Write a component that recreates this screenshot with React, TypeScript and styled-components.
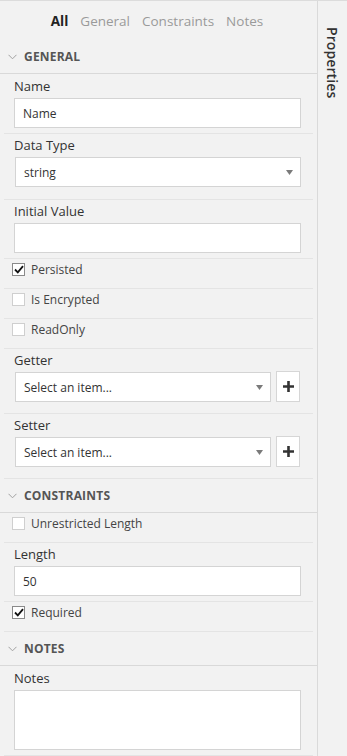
import React from "react";
import styled, { createGlobalStyle } from "styled-components";

const GlobalStyle = createGlobalStyle`
  html, body {
    margin: 0;
    padding: 0;
    background-color: #f2f2f2;
  }
  body {
    font-family: "Open Sans", "Noto Sans", Arial, sans-serif;
    color: #333;
  }
  * {
    box-sizing: border-box;
  }
`;

const Frame = styled.div`
  display: flex;
  width: 347px;
  height: 756px;
  border-top: 1px solid #dcdcdc;
  background-color: #f2f2f2;
  overflow: hidden;
`;

const Main = styled.div`
  width: 318px;
  flex-shrink: 0;
  border-right: 1px solid #dadada;
`;

const Side = styled.div`
  flex: 1;
  display: flex;
  justify-content: center;
  padding-top: 26px;
`;

const SideTitle = styled.div`
  writing-mode: vertical-rl;
  font-size: 14px;
  font-weight: 600;
  color: #333;
  letter-spacing: 0.1px;
`;

const Tabs = styled.div`
  height: 39px;
  display: flex;
  align-items: center;
  justify-content: center;
  gap: 12px;
  padding-right: 3px;
  font-size: 13.5px;
`;

const Tab = styled.span<{ $active?: boolean }>`
  color: ${(p) => (p.$active ? "#222" : "#9a9a9a")};
  font-weight: ${(p) => (p.$active ? 700 : 400)};
`;

const SectionHeader = styled.div`
  height: 34px;
  display: flex;
  align-items: center;
  gap: 7px;
  padding-left: 8px;
  border-bottom: 1px solid #d9d9d9;
  font-size: 12px;
  font-weight: 700;
  color: #555;
  letter-spacing: 0.2px;
`;

const Group = styled.div<{ $pt?: number; $pb?: number }>`
  margin: 0 4px;
  padding: ${(p) => p.$pt ?? 1}px 12px ${(p) => p.$pb ?? 5}px 10px;
  border-bottom: 1px solid #e4e4e4;
`;

const Label = styled.div`
  font-size: 13px;
  line-height: 20px;
  color: #333;
`;

const TextInput = styled.div`
  margin-top: 2px;
  height: 30px;
  background-color: #fff;
  border: 1px solid #d4d4d4;
  padding: 0 8px;
  display: flex;
  align-items: center;
  font-size: 12px;
  color: #333;
`;

const TextArea = styled(TextInput)`
  height: 60px;
`;

const SelectRow = styled.div<{ $inset?: boolean }>`
  display: flex;
  gap: 5px;
  margin-top: 2px;
  padding: 0 ${(p) => (p.$inset ? 1 : 0)}px 0 1px;
`;

const Select = styled.div`
  flex: 1;
  height: 30px;
  background-color: #fff;
  border: 1px solid #d4d4d4;
  padding: 0 7px 0 8px;
  display: flex;
  align-items: center;
  justify-content: space-between;
  font-size: 12px;
  color: #333;
`;

const PlusButton = styled.div`
  width: 24px;
  height: 31px;
  margin-top: -1px;
  background-color: #fff;
  border: 1px solid #d6d6d6;
  display: flex;
  align-items: center;
  justify-content: center;
`;

const CheckRow = styled.div`
  margin: 0 4px;
  height: 30px;
  padding: 0 0 8px 8px;
  display: flex;
  align-items: center;
  gap: 6px;
  border-bottom: 1px solid #e4e4e4;
  font-size: 12px;
  color: #444;
`;

const Box = styled.div<{ $checked?: boolean }>`
  width: 13px;
  height: 13px;
  background-color: #fff;
  border: 1px solid ${(p) => (p.$checked ? "#8a8a8a" : "#cfcfcf")};
  display: flex;
  align-items: center;
  justify-content: center;
`;

function Chevron() {
  return (
    <svg width="9" height="6" viewBox="0 0 9 6">
      <path d="M0.5 0.8 L4.5 4.8 L8.5 0.8" fill="none" stroke="#a0a0a0" strokeWidth="1" />
    </svg>
  );
}

function Arrow() {
  return (
    <svg width="7" height="5" viewBox="0 0 7 5">
      <path d="M0 0 H7 L3.5 5 Z" fill="#7a7a7a" />
    </svg>
  );
}

function Plus() {
  return (
    <svg width="11" height="11" viewBox="0 0 11 11">
      <path d="M5.5 0 V11 M0 5.5 H11" stroke="#333" strokeWidth="2.6" />
    </svg>
  );
}

function Checkbox({ checked, label }: { checked?: boolean; label: string }) {
  return (
    <CheckRow>
      <Box $checked={checked}>
        {checked && (
          <svg width="10" height="9" viewBox="0 0 10 9">
            <path d="M1 4.5 L3.8 7.3 L9 1.2" fill="none" stroke="#111" strokeWidth="1.8" />
          </svg>
        )}
      </Box>
      {label}
    </CheckRow>
  );
}

function Section({ title }: { title: string }) {
  return (
    <SectionHeader>
      <Chevron />
      {title}
    </SectionHeader>
  );
}

function PickField({ label }: { label: string }) {
  return (
    <Group $pb={11}>
      <Label>{label}</Label>
      <SelectRow $inset>
        <Select>
          Select an item...
          <Arrow />
        </Select>
        <PlusButton>
          <Plus />
        </PlusButton>
      </SelectRow>
    </Group>
  );
}

export default function App() {
  return (
    <>
      <GlobalStyle />
      <Frame>
        <Main>
          <Tabs>
            <Tab $active>All</Tab>
            <Tab>General</Tab>
            <Tab>Constraints</Tab>
            <Tab>Notes</Tab>
          </Tabs>

          <Section title="GENERAL" />
          <Group $pt={2}>
            <Label>Name</Label>
            <TextInput>Name</TextInput>
          </Group>
          <Group $pb={12}>
            <Label>Data Type</Label>
            <SelectRow>
              <Select>
                string
                <Arrow />
              </Select>
            </SelectRow>
          </Group>
          <Group>
            <Label>Initial Value</Label>
            <TextInput />
          </Group>
          <Checkbox checked label="Persisted" />
          <Checkbox label="Is Encrypted" />
          <Checkbox label="ReadOnly" />
          <PickField label="Getter" />
          <PickField label="Setter" />

          <Section title="CONSTRAINTS" />
          <Checkbox label="Unrestricted Length" />
          <Group>
            <Label>Length</Label>
            <TextInput>50</TextInput>
          </Group>
          <Checkbox checked label="Required" />

          <Section title="NOTES" />
          <Group $pt={2}>
            <Label>Notes</Label>
            <TextArea />
          </Group>
        </Main>
        <Side>
          <SideTitle>Properties</SideTitle>
        </Side>
      </Frame>
    </>
  );
}
